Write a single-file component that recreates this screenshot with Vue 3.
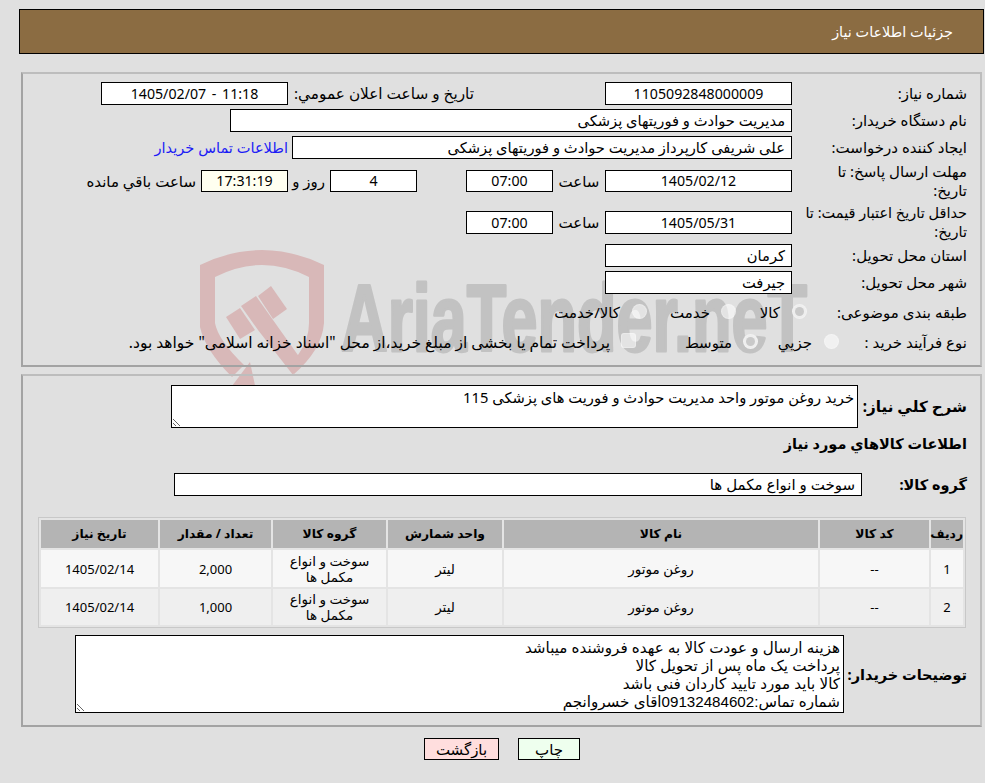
<script setup>
const items = [
  { id: 1, code: '--', name: 'روغن موتور', unit: 'لیتر', group: 'سوخت و انواع مکمل ها', qty: '2,000', date: '1405/02/14' },
  { id: 2, code: '--', name: 'روغن موتور', unit: 'لیتر', group: 'سوخت و انواع مکمل ها', qty: '1,000', date: '1405/02/14' },
]
const notes = 'هزینه ارسال و عودت کالا به عهده فروشنده میباشد\nپرداخت یک ماه پس از تحویل کالا\nکالا باید مورد تایید کاردان فنی باشد\nشماره تماس:09132484602اقای خسروانجم'
</script>

<template>
  <div class="page" dir="rtl">
    <svg class="watermark" width="985" height="783" viewBox="0 0 985 783" aria-hidden="true">
      <g fill="#d8b8b8">
        <path d="M200 265Q262 235 324 265V323Q322 350 293 375L298 355Q309 340 309 323V277Q262 253 215 277V323Q218 340 244 365L232 377Q205 350 200 327Z" />
        <path d="M226 317L240 308L255 330L240 339Z" />
        <path d="M241 306L256 296L273 320L300 358L293 375L258 330Z" />
        <path d="M258 296L271 286L287 309L273 319Z" />
        <path d="M250 362L256 390L232 386Z" />
      </g>
      <text class="wm-text" x="341" y="351" textLength="466" lengthAdjust="spacingAndGlyphs" direction="ltr">AriaTender.neT</text>
    </svg>

    <header class="title">جزئیات اطلاعات نیاز</header>

    <section class="panel first">
      <div class="row">
        <div class="label">شماره نیاز:</div>
        <div class="box center num wide">1105092848000009</div>
        <div class="label inline push">تاریخ و ساعت اعلان عمومي:</div>
        <div class="box center num wide stamp" dir="ltr">1405/02/07 - 11:18</div>
      </div>
      <div class="row">
        <div class="label">نام دستگاه خریدار:</div>
        <div class="box org">مدیریت حوادث و فوریتهای پزشکی</div>
      </div>
      <div class="row">
        <div class="label">ایجاد کننده درخواست:</div>
        <div class="box creator">علی شریفی کارپرداز مدیریت حوادث و فوریتهای پزشکی</div>
        <a class="contact">اطلاعات تماس خریدار</a>
      </div>
      <div class="row tall">
        <div class="label">مهلت ارسال پاسخ: تا<br />تاریخ:</div>
        <div class="box center num wide short">1405/02/12</div>
        <div class="label inline hour">ساعت</div>
        <div class="box center num time short">07:00</div>
        <div class="box center num time short days">4</div>
        <div class="label inline day">روز و</div>
        <div class="box center num time short timer">17:31:19</div>
        <div class="label inline left">ساعت باقي مانده</div>
      </div>
      <div class="row tall">
        <div class="label long">حداقل تاریخ اعتبار قیمت: تا<br />تاریخ:</div>
        <div class="box center num wide">1405/05/31</div>
        <div class="label inline hour">ساعت</div>
        <div class="box center num time">07:00</div>
      </div>
      <div class="row">
        <div class="label">استان محل تحویل:</div>
        <div class="box wide">کرمان</div>
      </div>
      <div class="row after">
        <div class="label">شهر محل تحویل:</div>
        <div class="box wide">جیرفت</div>
      </div>
      <div class="row choice">
        <div class="label">طبقه بندی موضوعی:</div>
        <span class="radio checked r1"></span><span class="opt o1">کالا</span>
        <span class="radio r2"></span><span class="opt o2">خدمت</span>
        <span class="radio r3"></span><span class="opt o3">کالا/خدمت</span>
      </div>
      <div class="row choice proc">
        <div class="label">نوع فرآیند خرید :</div>
        <span class="radio p1"></span><span class="opt q1">جزیي</span>
        <span class="radio checked p2"></span><span class="opt q2">متوسط</span>
        <span class="check"></span><span class="opt q3">پرداخت تمام یا بخشی از مبلغ خرید،از محل "اسناد خزانه اسلامی" خواهد بود.</span>
      </div>
    </section>

    <section class="panel second">
      <div class="desc">
        <div class="label strong">شرح کلي نیاز:</div>
        <textarea class="area desc-area" readonly>خرید روغن موتور واحد مدیریت حوادث و فوریت های پزشکی 115</textarea>
      </div>
      <div class="label strong heading">اطلاعات کالاهاي مورد نیاز</div>
      <div class="group">
        <div class="label strong">گروه کالا:</div>
        <div class="box group-box">سوخت و انواع مکمل ها</div>
      </div>
      <table class="goods">
        <colgroup>
          <col class="c1" /><col class="c2" /><col class="c3" /><col class="c4" /><col class="c5" /><col class="c6" /><col class="c7" />
        </colgroup>
        <thead>
          <tr>
            <th>ردیف</th><th>کد کالا</th><th>نام کالا</th><th>واحد شمارش</th><th>گروه کالا</th><th>تعداد / مقدار</th><th>تاریخ نیاز</th>
          </tr>
        </thead>
        <tbody>
          <tr v-for="item in items" :key="item.id">
            <td class="digits">{{ item.id }}</td><td class="digits">{{ item.code }}</td><td>{{ item.name }}</td><td>{{ item.unit }}</td><td>{{ item.group }}</td><td class="digits">{{ item.qty }}</td><td class="digits">{{ item.date }}</td>
          </tr>
        </tbody>
      </table>
      <div class="notes">
        <div class="label strong">توضیحات خریدار:</div>
        <textarea class="area notes-area" readonly :value="notes"></textarea>
      </div>
    </section>

    <footer class="actions">
      <button class="btn print" type="button">چاپ</button>
      <button class="btn back" type="button">بازگشت</button>
    </footer>
  </div>
</template>

<style>
html, body { margin: 0; background: #e0e0e0; }
</style>

<style scoped>
.page {
  position: relative;
  width: 985px;
  height: 783px;
  overflow: hidden;
  background: #e0e0e0;
  color: #000;
  font-family: "Noto Sans", "DejaVu Sans", sans-serif;
  font-size: 15px;
  line-height: 19px;
  box-sizing: border-box;
  padding-top: 9px;
}
.watermark { position: absolute; left: 0; top: 0; }
.wm-text {
  font-family: "Liberation Sans Narrow", "Liberation Sans", sans-serif;
  font-weight: 700;
  font-size: 94px;
  fill: #c2c2c2;
  stroke: #c2c2c2;
  stroke-width: 3px;
  stroke-linejoin: round;
}
.title {
  position: relative;
  box-sizing: border-box;
  height: 45px;
  margin: 0 1px 0 19px;
  padding: 12px 30px 0 0;
  background: #8b6c42;
  border: 1px solid #000;
  color: #fff;
  font-size: 14.4px;
}
.panel {
  position: relative;
  box-sizing: border-box;
  margin: 0 3px 0 21px;
  border: 2px solid #a3a3a3;
  border-right-color: #bdbdbd;
  border-top-color: #bdbdbd;
}
.first { margin-top: 18px; height: 295px; padding: 8px 13px 0 0; display: flex; flex-direction: column; gap: 4px; }
.second { margin-top: 7px; height: 353px; padding: 9px 13px 0 0; }
.row { display: flex; align-items: center; min-height: 23px; }
.tall { height: 38px; margin-top: -1px; }
.tall + .row { margin-top: -1px; }
.label { width: 175px; flex: none; box-sizing: border-box; padding-left: 8px; }
.long { white-space: nowrap; font-size: 14.5px; }
.inline { width: auto; padding: 0; }
.box {
  box-sizing: border-box;
  height: 23px;
  flex: none;
  padding: 0 6px;
  background: #fff;
  border: 1px solid #000;
  font-size: 14.7px;
  line-height: 21px;
  white-space: nowrap;
  overflow: hidden;
}
.center { text-align: center; padding: 0; }
.num { font-size: 14.2px; }
.stamp { word-spacing: 2px; }
.wide { width: 187px; }
.short { height: 22px; line-height: 20px; }
.push { width: 186px; margin-right: 131px; padding-left: 5px; white-space: nowrap; box-sizing: border-box; font-size: 15.3px; }
.org { width: 562px; }
.creator { width: 500px; }
.contact { margin-right: 4px; color: #1c1cf5; white-space: nowrap; font-size: 14.6px; }
.hour { width: 52px; text-align: center; }
.time { width: 87px; }
.days { margin-right: 49px; }
.day { margin: 0 5px; width: 32px; text-align: center; white-space: nowrap; }
.timer { background: #fffff0; }
.left { margin-right: 5px; white-space: nowrap; }
.after { margin-bottom: 4px; }
.choice { position: relative; height: 20px; min-height: 20px; }
.proc { margin-top: 6px; }
.radio, .check {
  position: absolute;
  top: 2px;
  box-sizing: border-box;
  width: 15px;
  height: 15px;
  border-radius: 50%;
  background: rgba(255, 255, 255, 0.55);
  border: 1px solid rgba(255, 255, 255, 0.25);
}
.check { border-radius: 3px; top: 1px; }
.checked { background: #eee; }
.checked::after {
  content: "";
  position: absolute;
  inset: 2px;
  border-radius: 50%;
  background: #c9c9c9;
}
.opt { position: absolute; top: 1px; white-space: nowrap; }
.r1 { right: 160px; } .o1 { right: 187px; }
.r2 { right: 231px; } .o2 { right: 257px; }
.r3 { right: 320px; } .o3 { right: 347px; }
.p1 { right: 128px; } .q1 { right: 155px; }
.p2 { right: 209px; } .q2 { right: 235px; }
.check { right: 331px; } .q3 { right: 357px; font-size: 15.5px; }

.desc { display: flex; align-items: center; height: 43px; }
.strong { font-weight: 700; width: auto; padding: 0; white-space: nowrap; font-size: 14.5px; }
.area {
  box-sizing: border-box;
  display: block;
  flex: none;
  margin: 0;
  padding: 2px 3px;
  background: #fff;
  border: 1px solid #000;
  border-radius: 0;
  color: #000;
  font: inherit;
  outline: none;
  overflow: hidden;
}
.desc .strong { width: 109px; font-size: 15.2px; }
.desc-area { width: 687px; height: 43px; font-size: 14.7px; }
.heading { margin-top: 6px; }
.group { display: flex; align-items: center; margin-top: 20px; }
.group .strong { width: 105px; }
.group-box { width: 688px; padding-right: 6px; font-size: 15px; }
.goods {
  box-sizing: border-box;
  width: 928px;
  margin: 21px 1px 0 0;
  border: 1px solid #c8c8c8;
  border-collapse: separate;
  border-spacing: 2px;
  table-layout: fixed;
  background: #e4e4e4;
  text-align: center;
  font-size: 13.5px;
  line-height: 16px;
}
.c1 { width: 32px; } .c2 { width: 109px; } .c3 { width: 314px; } .c4 { width: 114px; }
.c5 { width: 113px; } .c6 { width: 111px; } .c7 { width: 117px; }
.goods th { height: 28px; padding: 0; background: #b4b4b4; font-weight: 700; font-size: 12.3px; white-space: nowrap; }
.goods td { height: 37px; padding: 0 8px; background: #f7f7f7; }
.goods td.digits { font-size: 13px; }
.goods tbody tr + tr td { background: #efefef; height: 36px; }
.notes { display: flex; align-items: center; margin-top: 7px; }
.notes .strong { width: 123px; }
.notes-area {
  width: 769px;
  height: 78px;
  padding: 3px 3px 0;
  font-family: "Liberation Sans", "DejaVu Sans", sans-serif;
  font-size: 15.15px;
  line-height: 18px;
}
.actions { position: relative; display: flex; justify-content: flex-start; gap: 19px; padding: 11px 405px 0 0; }
.btn {
  box-sizing: border-box;
  height: 22px;
  padding: 0;
  border: 1px solid #000;
  border-radius: 0;
  color: #000;
  font: inherit;
  line-height: 18px;
}
.print { width: 62px; background: #eeffee; }
.back { width: 75px; background: #ffdede; }
</style>
